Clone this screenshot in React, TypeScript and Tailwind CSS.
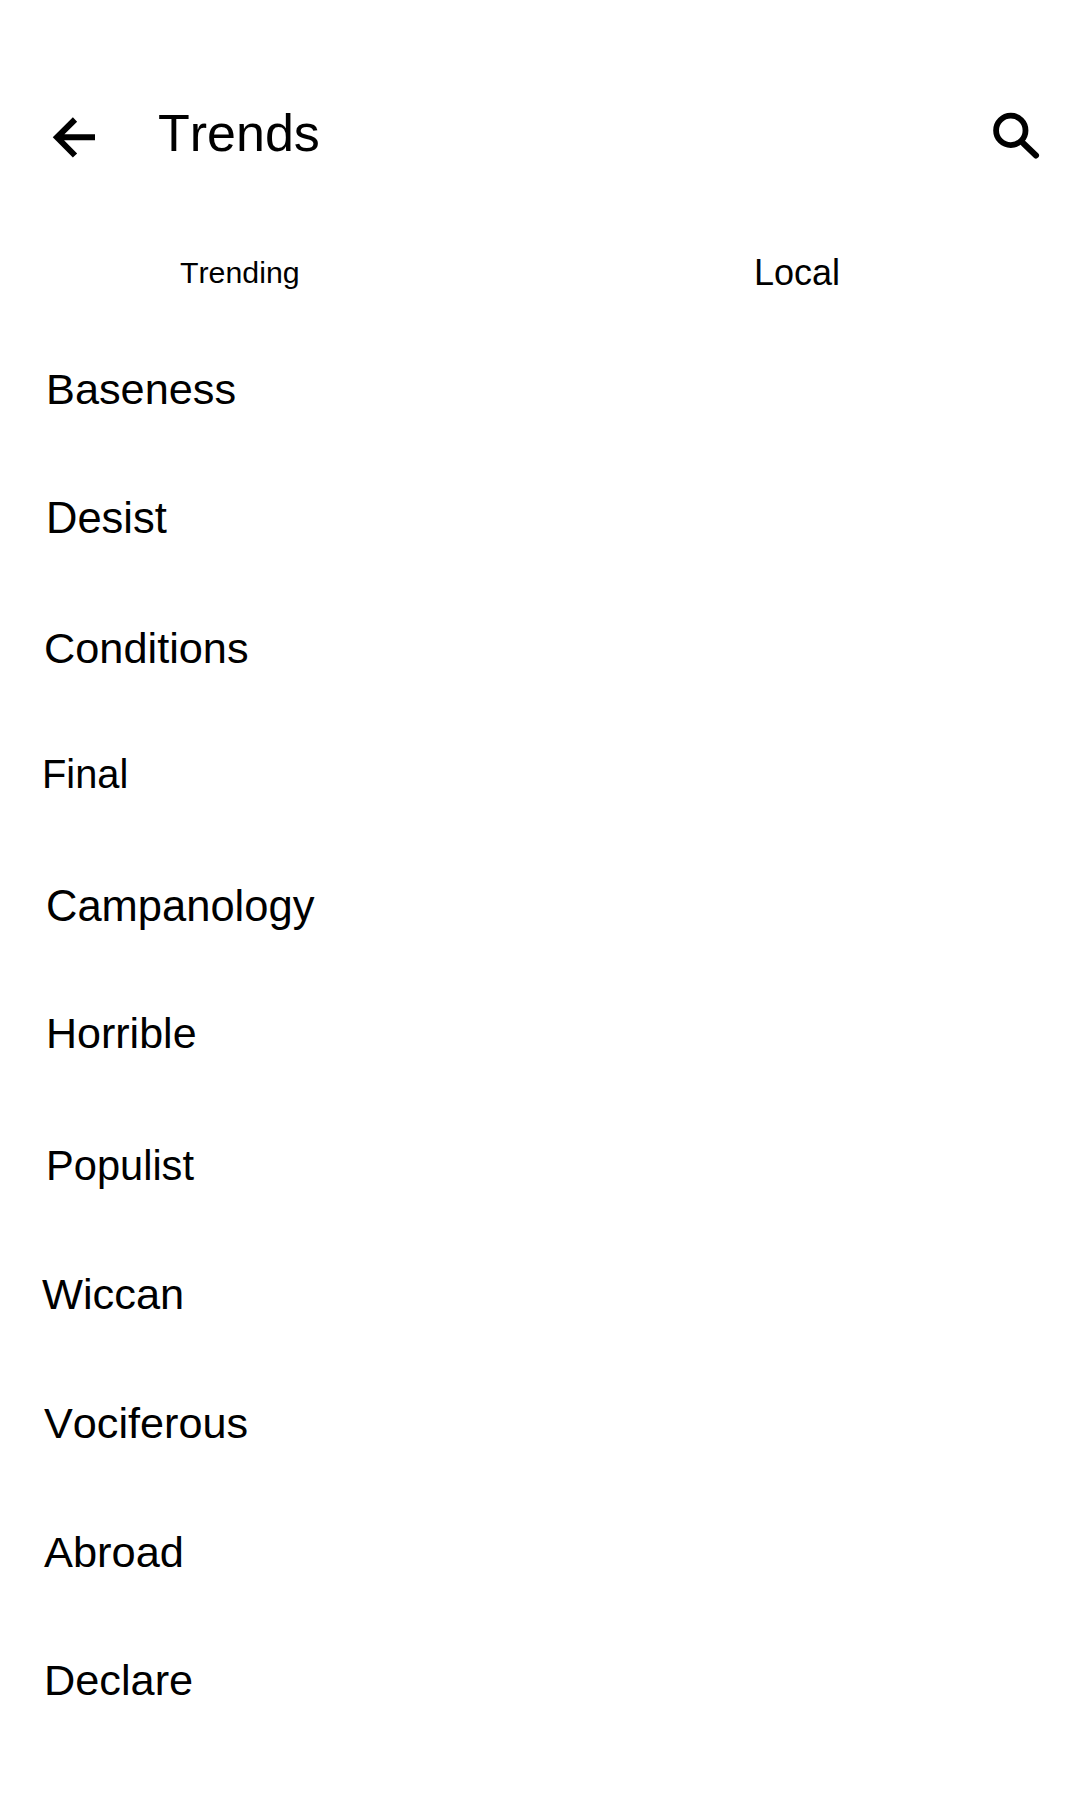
const rows = [
  { t: "Baseness", c: "pt-[38px] pl-[46px] text-[43.3px]" },
  { t: "Desist", c: "pt-[38px] pl-[46px] text-[43.5px]" },
  { t: "Conditions", c: "pt-[39px] pl-[44px] text-[43.3px]" },
  { t: "Final", c: "pt-[36px] pl-[42px] text-[39.8px]" },
  { t: "Campanology", c: "pt-[39px] pl-[46px] text-[43.5px]" },
  { t: "Horrible", c: "pt-[37px] pl-[46px] text-[43px]" },
  { t: "Populist", c: "pt-[41px] pl-[46px] text-[41.6px]" },
  { t: "Wiccan", c: "pt-[40px] pl-[42px] text-[43.4px]" },
  { t: "Vociferous", c: "pt-[40px] pl-[44px] text-[43.2px]" },
  { t: "Abroad", c: "pt-[40px] pl-[44px] text-[43.4px]" },
  { t: "Declare", c: "pt-[39px] pl-[44px] text-[43.3px]" },
];

export default function App() {
  return (
    <div className="h-[1800px] w-[1080px] overflow-hidden bg-white text-black font-['Liberation_Sans',Arial,sans-serif] [font-kerning:none]">
      <header className="flex h-[216px] items-start pt-[103px]">
        <svg className="ml-[52px] mt-[13px] h-[42px] w-[44px]" viewBox="0 0 44 42" fill="none" stroke="currentColor" strokeWidth="6">
          <path d="M23 3.5 5 21.3 23 39.5M4 21.3H43" />
        </svg>
        <h1 className="ml-[62px] text-[52px] leading-[60px]">Trends</h1>
        <svg className="ml-auto mr-[40px] mt-[9px] h-[48px] w-[48px]" viewBox="0 0 48 48" fill="none" stroke="currentColor">
          <circle cx="18.8" cy="18.4" r="14.7" strokeWidth="5.8" />
          <path d="M28 28 31 31" strokeWidth="5" />
          <path d="M31.5 31.5 44 43.5" strokeWidth="6" strokeLinecap="round" />
        </svg>
      </header>
      <nav className="grid h-[110px] grid-cols-2 leading-[61px]">
        <div className="pl-[180px] pt-[26px] text-[30.3px]">Trending</div>
        <div className="pl-[214px] pt-[26px] text-[36px]">Local</div>
      </nav>
      <ul>
        {rows.map((r) => (
          <li key={r.t} className={`h-[129px] leading-[50px] ${r.c}`}>{r.t}</li>
        ))}
      </ul>
    </div>
  );
}
